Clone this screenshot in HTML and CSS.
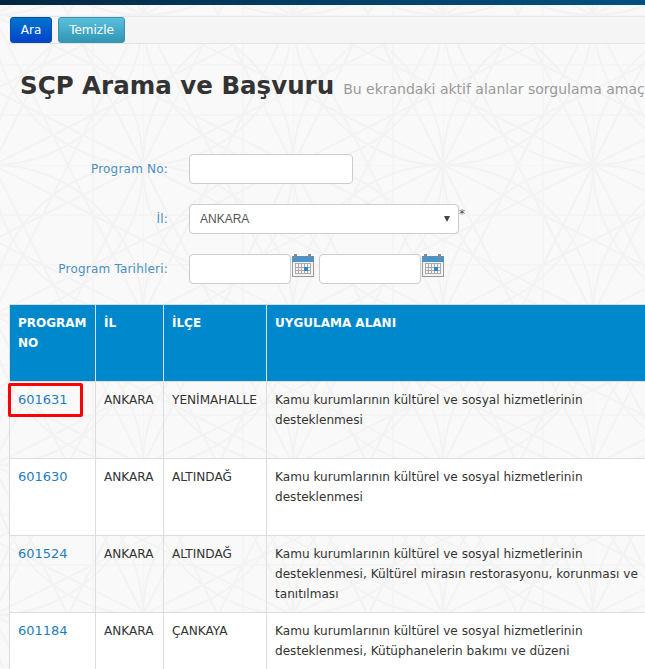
FILE: index.html
```html
<!DOCTYPE html>
<html>
<head>
    <meta charset="utf-8"/>
    <title>SÇP Arama ve Başvuru</title>
    <link rel="stylesheet" href="styles.css">
</head>
<body>
<!--zemin deseni-->
<svg class="bgPattern" width="645" height="669">
    <defs>
        <pattern id="star" x="-7" y="15" width="150" height="150" patternUnits="userSpaceOnUse">
            <g fill="none" stroke="#f3f3f3" stroke-width="2">
                <path d="M0 0H150M0 50H150M0 100H150M0 0V150M100 0V150" stroke-width="1.5"/>
                <circle cx="0" cy="0" r="150"/>
                <circle cx="150" cy="0" r="150"/>
                <circle cx="0" cy="150" r="150"/>
                <circle cx="150" cy="150" r="150"/>
                <path d="M0 0L150 75M0 150L150 75M0 75L150 0M0 75L150 150"/>
                <path d="M0 0L75 150M150 0L75 150M75 0L0 150M75 0L150 150"/>
            </g>
        </pattern>
    </defs>
    <rect width="645" height="669" fill="url(#star)"/>
</svg>

<div class="topBar"></div>

<div class="toolBar">
    <button class="btn btnBlue">Ara</button>
    <button class="btn btnTeal">Temizle</button>
</div>

<h1 class="pageTitle">SÇP Arama ve Başvuru<small>Bu ekrandaki aktif alanlar sorgulama amaç</small></h1>

<div class="searchForm">
    <div class="formRow">
        <label>Program No:</label>
        <input type="text" class="inp inpNo">
    </div>
    <div class="formRow">
        <label>İl:</label>
        <div class="inp inpSelect">
            <span>ANKARA</span>
            <i class="caret"></i>
        </div>
        <span class="star">*</span>
    </div>
    <div class="formRow">
        <label>Program Tarihleri:</label>
        <input type="text" class="inp inpDate">
        <svg class="cal" width="22" height="23" viewBox="0 0 22 23">
            <rect x="0.5" y="2.5" width="21" height="20" fill="#f4f4f4" stroke="#999"/>
            <rect x="0" y="2" width="22" height="6" fill="#4a94c8"/>
            <rect x="2" y="0" width="3" height="4" fill="#888"/>
            <rect x="16" y="0" width="3" height="4" fill="#888"/>
            <path d="M3 9.5H19M3 13.5H19M3 16.5H19M3 19.5H19M3.5 9V20M6.5 9V20M9.5 9V20M12.5 9V20M15.5 9V20M18.5 9V20" stroke="#aaa" fill="none"/>
            <rect x="12" y="13" width="4" height="4" fill="#2f86c4"/>
        </svg>
        <input type="text" class="inp inpDate inpDate2">
        <svg class="cal" width="22" height="23" viewBox="0 0 22 23">
            <rect x="0.5" y="2.5" width="21" height="20" fill="#f4f4f4" stroke="#999"/>
            <rect x="0" y="2" width="22" height="6" fill="#4a94c8"/>
            <rect x="2" y="0" width="3" height="4" fill="#888"/>
            <rect x="16" y="0" width="3" height="4" fill="#888"/>
            <path d="M3 9.5H19M3 13.5H19M3 16.5H19M3 19.5H19M3.5 9V20M6.5 9V20M9.5 9V20M12.5 9V20M15.5 9V20M18.5 9V20" stroke="#aaa" fill="none"/>
            <rect x="12" y="13" width="4" height="4" fill="#2f86c4"/>
        </svg>
    </div>
</div>

<div class="tableWrap">
    <table class="resultTable">
        <colgroup>
            <col class="c1"><col class="c2"><col class="c3"><col class="c4"><col class="c5">
        </colgroup>
        <thead>
        <tr>
            <th>PROGRAM NO</th>
            <th>İL</th>
            <th>İLÇE</th>
            <th>UYGULAMA ALANI</th>
            <th></th>
        </tr>
        </thead>
        <tbody>
        <tr>
            <td><a href="#" class="mark">601631</a></td>
            <td>ANKARA</td>
            <td>YENİMAHALLE</td>
            <td>Kamu kurumlarının kültürel ve sosyal hizmetlerinin desteklenmesi</td>
            <td></td>
        </tr>
        <tr>
            <td><a href="#">601630</a></td>
            <td>ANKARA</td>
            <td>ALTINDAĞ</td>
            <td>Kamu kurumlarının kültürel ve sosyal hizmetlerinin desteklenmesi</td>
            <td></td>
        </tr>
        <tr>
            <td><a href="#">601524</a></td>
            <td>ANKARA</td>
            <td>ALTINDAĞ</td>
            <td>Kamu kurumlarının kültürel ve sosyal hizmetlerinin desteklenmesi, Kültürel mirasın restorasyonu, korunması ve tanıtılması</td>
            <td></td>
        </tr>
        <tr>
            <td><a href="#">601184</a></td>
            <td>ANKARA</td>
            <td>ÇANKAYA</td>
            <td>Kamu kurumlarının kültürel ve sosyal hizmetlerinin desteklenmesi, Kütüphanelerin bakımı ve düzeni</td>
            <td></td>
        </tr>
        </tbody>
    </table>
</div>
</body>
</html>
```

FILE: styles.css
```css
html, body {
    margin: 0;
    padding: 0;
    height: 669px;
    overflow: hidden;
}

body {
    position: relative;
    background: #f9f9f9;
    font-family: "DejaVu Sans", Verdana, sans-serif;
    font-size: 12px;
    color: #333;
}

.bgPattern {
    position: absolute;
    left: 0;
    top: 0;
}

.topBar, .toolBar, .pageTitle, .searchForm, .tableWrap {
    position: relative;
}

.topBar {
    height: 5px;
    background: linear-gradient(to right, #04263f, #003f66 50%, #00517f);
}

.toolBar {
    display: flex;
    gap: 6px;
    margin: 11px 0 0 9px;
    padding: 0 1px;
    height: 26px;
    background: #f5f5f5;
    border-top: 1px solid #e6e6e6;
    border-bottom: 1px solid #e3e3e3;
}

.btn {
    height: 26px;
    padding: 0;
    border-radius: 3px;
    color: #fff;
    font-family: inherit;
    font-size: 12px;
}

.btnBlue {
    width: 42px;
    border: 1px solid #0052a8;
    background: linear-gradient(#0074cc, #0044cc);
}

.btnTeal {
    width: 67px;
    border: 1px solid #3c93ad;
    background: linear-gradient(#5bc0de, #2f96b4);
}

.pageTitle {
    margin: 26px 0 0 20px;
    height: 32px;
    line-height: 32px;
    font-size: 24.5px;
    font-weight: bold;
    color: #333;
    white-space: nowrap;
}

.pageTitle small {
    margin-left: 9px;
    font-size: 14px;
    font-weight: normal;
    color: #999;
}

.searchForm {
    margin-top: 52px;
}

.formRow {
    display: flex;
    align-items: flex-start;
    height: 30px;
    margin-bottom: 20px;
}

.formRow label {
    width: 189px;
    padding-right: 21px;
    box-sizing: border-box;
    line-height: 30px;
    letter-spacing: 0.2px;
    text-align: right;
    color: #4b8fbf;
}

.inp {
    height: 30px;
    box-sizing: border-box;
    border: 1px solid #ccc;
    border-radius: 4px;
    background: #fff;
}

.inpNo {
    width: 164px;
}

.inpSelect {
    display: flex;
    align-items: center;
    justify-content: space-between;
    width: 270px;
    padding: 0 8px 0 10px;
    color: #555;
    font-family: "Liberation Sans", Arial, sans-serif;
}

.caret {
    width: 0;
    height: 0;
    border-left: 3px solid transparent;
    border-right: 3px solid transparent;
    border-top: 6px solid #444;
}

.star {
    line-height: 20px;
    color: #555;
}

.inpDate {
    width: 102px;
}

.inpDate2 {
    margin-left: 5px;
}

.cal {
    flex: none;
    margin-left: 1px;
}

.tableWrap {
    padding-left: 9px;
    overflow: hidden;
}

.resultTable {
    width: 760px;
    table-layout: fixed;
    border-collapse: collapse;
}

.c1 { width: 86px; }
.c2 { width: 68px; }
.c3 { width: 103px; }
.c4 { width: 392px; }

.resultTable th, .resultTable td {
    padding: 8px;
    border: 1px solid #ddd;
    line-height: 20px;
    text-align: left;
    vertical-align: top;
}

.resultTable th {
    height: 60px;
    background: #0088cc;
    color: #fff;
    font-weight: bold;
}

.resultTable td {
    height: 60px;
    font-size: 12.1px;
    color: #333;
}

.resultTable tbody tr:nth-child(even) td {
    background: #fff;
}

.resultTable a {
    color: #1f7cbf;
    font-size: 13px;
    text-decoration: none;
}

/* kirmizi isaret kutusu */
.mark {
    position: relative;
}

.mark::after {
    content: "";
    position: absolute;
    left: -10px;
    top: -9px;
    width: 69px;
    height: 28px;
    border: 3px solid #f00;
    border-radius: 2px;
}
```
